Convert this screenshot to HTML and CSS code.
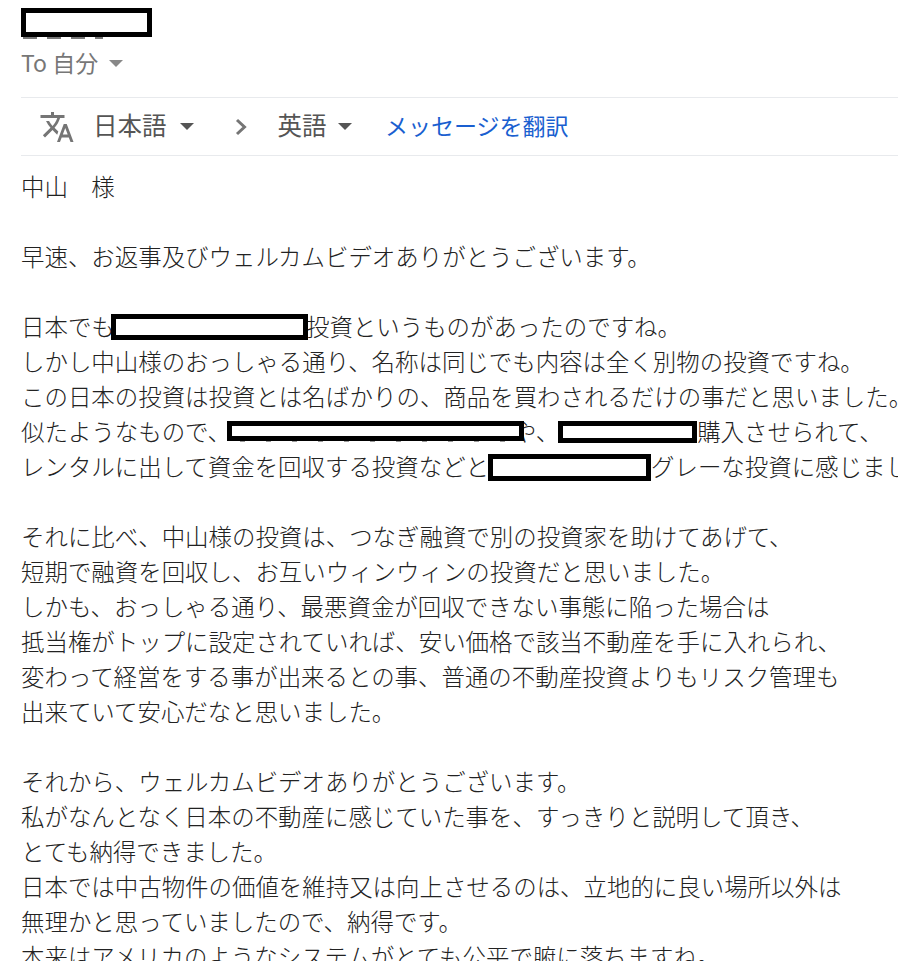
FILE: index.html
```html
<!DOCTYPE html>
<html lang="ja">
<head>
<meta charset="utf-8">
<title>メール</title>
<link rel="stylesheet" href="styles.css">
</head>
<body>
<main class="mail">
  <header class="head">
    <div class="sender"><span class="redact redact-sender"></span></div>
    <div class="to">To 自分<span class="caret caret-to"></span></div>
  </header>
  <div class="bar">
    <svg class="tr-icon" viewBox="0 0 24 24" aria-hidden="true">
      <path fill="#757575" d="M12.87 15.07l-2.54-2.51.03-.03c1.74-1.94 2.98-4.17 3.71-6.53H17V4h-7V2H8v2H1v1.99h11.17C11.5 7.92 10.44 9.75 9 11.35 8.07 10.32 7.3 9.19 6.69 8h-2c.73 1.63 1.73 3.17 2.98 4.56l-5.09 5.02L4 19l5-5 3.11 3.11.76-2.04zM18.5 10h-2L12 22h2l1.12-3h4.75L21 22h2l-4.5-12zm-2.62 7l1.62-4.33L19.12 17h-3.24z"/>
    </svg>
    <span class="lang">日本語</span><span class="caret caret-from"></span>
    <svg class="chev" viewBox="0 0 12 18" aria-hidden="true"><path d="M2 2L9.5 9L2 16" fill="none" stroke="#757575" stroke-width="3"/></svg>
    <span class="lang">英語</span><span class="caret caret-en"></span>
    <span class="link">メッセージを翻訳</span>
  </div>
  <div class="body">
    <p>中山　様</p>
    <p class="gap"></p>
    <p>早速、お返事及びウェルカムビデオありがとうございます。</p>
    <p class="gap"></p>
    <p>日本でも<span class="redact r1"></span>投資というものがあったのですね。</p>
    <p>しかし中山様のおっしゃる通り、名称は同じでも内容は全く別物の投資ですね。</p>
    <p>この日本の投資は投資とは名ばかりの、商品を買わされるだけの事だと思いました。</p>
    <p>似たようなもので、<span class="redact r2"></span>や、<span class="redact r3"></span>購入させられて、</p>
    <p>レンタルに出して資金を回収する投資などと<span class="redact r4"></span>グレーな投資に感じました。</p>
    <p class="gap"></p>
    <p>それに比べ、中山様の投資は、つなぎ融資で別の投資家を助けてあげて、</p>
    <p>短期で融資を回収し、お互いウィンウィンの投資だと思いました。</p>
    <p>しかも、おっしゃる通り、最悪資金が回収できない事態に陥った場合は</p>
    <p>抵当権がトップに設定されていれば、安い価格で該当不動産を手に入れられ、</p>
    <p>変わって経営をする事が出来るとの事、普通の不動産投資よりもリスク管理も</p>
    <p>出来ていて安心だなと思いました。</p>
    <p class="gap"></p>
    <p>それから、ウェルカムビデオありがとうございます。</p>
    <p>私がなんとなく日本の不動産に感じていた事を、すっきりと説明して頂き、</p>
    <p>とても納得できました。</p>
    <p>日本では中古物件の価値を維持又は向上させるのは、立地的に良い場所以外は</p>
    <p>無理かと思っていましたので、納得です。</p>
    <p>本来はアメリカのようなシステムがとても公平で腑に落ちますね。</p>
  </div>
</main>
</body>
</html>
```

FILE: styles.css
```css
html, body {
  margin: 0;
  padding: 0;
  background: #fff;
}
body {
  width: 898px;
  height: 961px;
  overflow: hidden;
  font-family: "Noto Sans CJK JP", "Noto Sans", sans-serif;
  font-weight: 300;
}
.mail {
  padding: 8px 0 0 21px;
}
.head {
  height: 89px;
}
.sender {
  height: 38px;
}
.redact {
  display: inline-block;
  box-sizing: border-box;
  position: relative;
  z-index: 1;
  background: #fff;
  border: 5px solid #000;
  vertical-align: top;
}
/* Bits of the hidden text that peek out under a redaction box */
.redact-sender::after,
.r2::after {
  content: "";
  position: absolute;
  top: 100%;
  height: 2px;
  margin-top: 5px;
}
.redact-sender::after {
  left: -3px;
  width: 80px;
  background: repeating-linear-gradient(90deg, #777 0 14px, transparent 14px 24px);
}
.r2::after {
  left: 8px;
  width: 270px;
  height: 1px;
  background: repeating-linear-gradient(90deg, #999 0 5px, transparent 5px 26px);
}
.redact-sender {
  width: 131px;
  height: 29px;
}
.to {
  font-size: 23px;
  font-weight: 400;
  line-height: 32px;
  color: #777;
}
.caret {
  display: inline-block;
  width: 0;
  height: 0;
  border-left: 7px solid transparent;
  border-right: 7px solid transparent;
  border-top: 7px solid #555;
}
.caret-to {
  border-top-color: #888;
  margin-left: 11px;
  vertical-align: 5px;
}
.bar {
  display: flex;
  align-items: center;
  height: 57px;
  border-top: 1px solid #e8eaed;
  border-bottom: 1px solid #e8eaed;
  padding-left: 17.5px;
}
.tr-icon {
  width: 36px;
  height: 36px;
  margin-right: 19.5px;
}
.lang {
  font-size: 24.5px;
  font-weight: 400;
  color: #555;
  margin-bottom: 4px;
  margin-left: -1px;
}
.caret-from {
  margin-left: 13.5px;
}
.chev {
  width: 12px;
  height: 18px;
  margin: 0 31.5px 0 41px;
}
.caret-en {
  margin-left: 11.5px;
}
.link {
  font-size: 23px;
  font-weight: 400;
  color: #1a5fd0;
  margin-left: 33px;
  margin-bottom: 4px;
}
.body {
  padding-top: 13px;
  font-size: 23.45px;
  line-height: 35px;
  color: #222;
  white-space: nowrap;
}
.body p {
  margin: 0;
  height: 35px;
}
.r1 {
  width: 197px;
  height: 26px;
  margin: 5px -2px 0 -3.8px;
}
.r2 {
  width: 297px;
  height: 20px;
  margin: 7px -11px 0 -4px;
}
.r3 {
  width: 139px;
  height: 22px;
  margin: 7px 0 0 -1px;
}
.r4 {
  width: 163px;
  height: 27px;
  margin: 5px 0 0 -1px;
}
```
